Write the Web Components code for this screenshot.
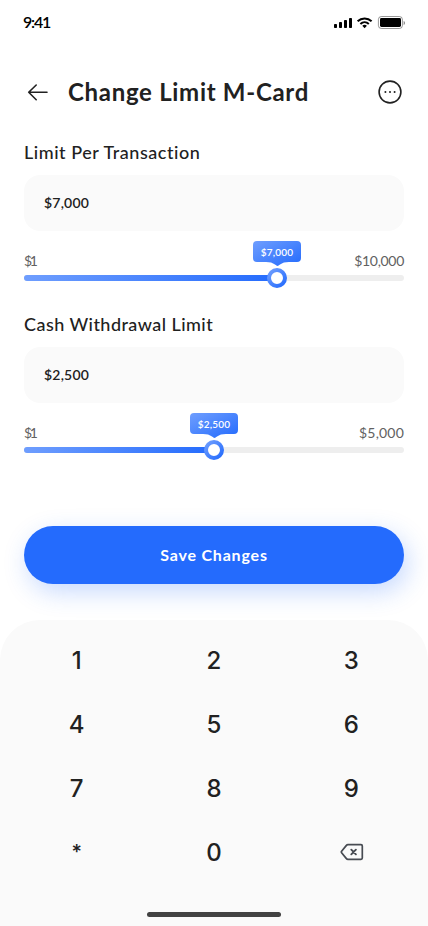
<!DOCTYPE html>
<html lang="en">
<head>
<meta charset="utf-8">
<meta name="viewport" content="width=device-width, initial-scale=1">
<title>Change Limit M-Card</title>
<style>
  body {
    margin: 0;
    background: #fff;
    color: #212121;
    font-family: Lato, "Liberation Sans", sans-serif;
  }

  .cash {
    --label-spacing: 0.45px;
    --max-spacing: 0.2px;
  }
</style>
</head>
<body>
<limit-screen>
  <status-bar time="9:41"></status-bar>
  <page-header>Change Limit M-Card</page-header>
  <limit-field label="Limit Per Transaction" value="$7,000" min="$1" max="$10,000" percent="66.6"></limit-field>
  <limit-field class="cash" label="Cash Withdrawal Limit" value="$2,500" min="$1" max="$5,000" percent="50"></limit-field>
  <primary-button>Save Changes</primary-button>
  <number-pad slot="bottom"></number-pad>
</limit-screen>

<script>
class LimitScreen extends HTMLElement {
  constructor() {
    super();
    this.attachShadow({ mode: 'open' });
    this.shadowRoot.innerHTML = `
    <style>
      :host {
        display: flex;
        flex-direction: column;
        width: 428px;
        height: 926px;
        overflow: hidden;
      }

      main {
        flex: 1;
        display: flex;
        flex-direction: column;
        box-sizing: border-box;
        padding: 0 24px;
      }
    </style>
    <main><slot></slot></main>
    <slot name="bottom"></slot>
    `;
  }
}

class StatusBar extends HTMLElement {
  constructor() {
    super();
    this.attachShadow({ mode: 'open' });
    this.shadowRoot.innerHTML = `
    <style>
      :host {
        display: flex;
        justify-content: space-between;
        align-items: center;
        height: 44px;
        margin: 0 -1px;
        color: #000;
      }

      .time {
        font-size: 16px;
        font-weight: 600;
        line-height: 20px;
        letter-spacing: -1.2px;
      }

      svg {
        display: block;
      }
    </style>
    <span class="time">${this.getAttribute('time')}</span>
    <svg width="72" height="14" viewBox="0 0 72 14">
      <rect x="1" y="9" width="3" height="4" rx="0.8"/>
      <rect x="6" y="7" width="3" height="6" rx="0.8"/>
      <rect x="11" y="5" width="3" height="8" rx="0.8"/>
      <rect x="16" y="3" width="3" height="10" rx="0.8"/>
      <g fill="none" stroke="#000" stroke-width="2">
        <path d="M24.6 6.2a10.2 10.2 0 0 1 14 0"/>
        <path d="M27.4 9a6.2 6.2 0 0 1 8.4 0"/>
      </g>
      <path d="M31.6 13.2l-2.3-2.4a3.4 3.4 0 0 1 4.6 0z"/>
      <rect x="45.4" y="1.5" width="24" height="12" rx="3" fill="none" stroke="#000" stroke-opacity=".4"/>
      <rect x="47" y="3" width="21" height="9" rx="1.4"/>
      <path d="M70.6 6v4c.9-.3 1.4-1.1 1.4-2s-.5-1.7-1.4-2z" fill-opacity=".45"/>
    </svg>
    `;
  }
}

class PageHeader extends HTMLElement {
  constructor() {
    super();
    this.attachShadow({ mode: 'open' });
    this.shadowRoot.innerHTML = `
    <style>
      :host {
        display: flex;
        align-items: center;
        gap: 16px;
        height: 48px;
        margin-top: 24px;
      }

      h1 {
        flex: 1;
        margin: 0;
        padding-bottom: 2px;
        font-size: 24px;
        font-weight: 700;
        line-height: 29px;
        letter-spacing: 0.7px;
        white-space: nowrap;
      }

      svg {
        flex: none;
        fill: none;
        stroke: #212121;
        stroke-linecap: round;
        stroke-linejoin: round;
      }
    </style>
    <svg width="28" height="28" viewBox="0 0 28 28" stroke-width="1.6">
      <path d="M4.7 14.3h18.3M12.2 7l-7.5 7.3 7.5 7.4"/>
    </svg>
    <h1><slot></slot></h1>
    <svg width="28" height="28" viewBox="0 0 28 28" stroke-width="1.6">
      <circle cx="14" cy="14" r="10.9"/>
      <path d="M9.4 14h.01M14 14h.01M18.6 14h.01" stroke-width="2"/>
    </svg>
    `;
  }
}

class LimitField extends HTMLElement {
  constructor() {
    super();
    this.attachShadow({ mode: 'open' });
    const value = this.getAttribute('value');
    this.shadowRoot.innerHTML = `
    <style>
      :host {
        display: block;
        height: 147px;
        margin-top: 25px;
      }

      .label {
        font-size: 18px;
        font-weight: 500;
        line-height: 22px;
        letter-spacing: var(--label-spacing, 0.54px);
        white-space: nowrap;
      }

      .value {
        display: flex;
        align-items: center;
        box-sizing: border-box;
        height: 56px;
        margin-top: 12px;
        padding: 0 20px 1px;
        border-radius: 16px;
        background: #fafafa;
        font-size: 14px;
        font-weight: 600;
        letter-spacing: 0.2px;
      }

      .range {
        display: flex;
        justify-content: space-between;
        margin-top: 20px;
        font-size: 14px;
        line-height: 20px;
        color: #616161;
      }

      .min {
        letter-spacing: -2.4px;
      }

      .max {
        letter-spacing: var(--max-spacing, -0.3px);
      }

      .track {
        position: relative;
        height: 6px;
        margin-top: 4px;
        border-radius: 3px;
        background: #eee;
      }

      .fill {
        width: ${this.getAttribute('percent')}%;
        height: 100%;
        border-radius: 3px;
        background: linear-gradient(286deg, #246bfd 0%, #6f9efe 100%);
      }

      /* knob and tooltip sit over the track */
      .knob, .tip {
        position: absolute;
        left: ${this.getAttribute('percent')}%;
        transform: translateX(-50%);
      }

      .knob {
        top: -7px;
      }

      .tip {
        top: -34px;
        width: 48px;
        height: 26px;
      }

      .tip svg {
        position: absolute;
        inset: 0;
      }

      .tip span {
        position: relative;
        display: block;
        color: #fff;
        font-size: 10px;
        font-weight: 600;
        line-height: 22px;
        letter-spacing: 0.2px;
        text-align: center;
      }

      svg {
        display: block;
      }
    </style>
    <div class="label">${this.getAttribute('label')}</div>
    <div class="value"><span>${value}</span></div>
    <div class="range">
      <span class="min">${this.getAttribute('min')}</span>
      <span class="max">${this.getAttribute('max')}</span>
    </div>
    <div class="track">
      <div class="fill"></div>
      <svg class="knob" width="20" height="20" viewBox="0 0 20 20">
        <defs>
          <linearGradient id="ring" x1="0" y1="0" x2="1" y2="1">
            <stop offset="0" stop-color="#6f9efe"/>
            <stop offset="1" stop-color="#246bfd"/>
          </linearGradient>
        </defs>
        <circle cx="10" cy="10" r="8" fill="#fff" stroke="url(#ring)" stroke-width="4"/>
      </svg>
      <div class="tip">
        <svg width="48" height="26" viewBox="0 0 48 26">
          <defs>
            <linearGradient id="bubble" x1="0" y1="0" x2="1" y2="1">
              <stop offset="0" stop-color="#6f9efe"/>
              <stop offset="1" stop-color="#246bfd"/>
            </linearGradient>
          </defs>
          <path fill="url(#bubble)" d="M4 0h40a4 4 0 0 1 4 4v13a4 4 0 0 1-4 4H36c-4 0-6.500.8-9 2.600l-1.400 1a2 2 0 0 1-2.200 0l-1.400-1C19.500 21.800 17 21 13 21H4a4 4 0 0 1-4-4V4a4 4 0 0 1 4-4z"/>
        </svg>
        <span>${value}</span>
      </div>
    </div>
    `;
  }
}

class PrimaryButton extends HTMLElement {
  constructor() {
    super();
    this.attachShadow({ mode: 'open' });
    this.shadowRoot.innerHTML = `
    <style>
      :host {
        display: block;
        margin-top: 66px;
      }

      button {
        display: block;
        width: 100%;
        height: 58px;
        padding: 0;
        border: 0;
        border-radius: 29px;
        background: #246bfd;
        box-shadow: 4px 8px 24px rgba(36, 107, 253, 0.25);
        color: #fff;
        font: 700 16px/22px Lato, "Liberation Sans", sans-serif;
        letter-spacing: 0.8px;
      }
    </style>
    <button type="button"><slot></slot></button>
    `;
  }
}

class NumberPad extends HTMLElement {
  constructor() {
    super();
    this.attachShadow({ mode: 'open' });
    const keys = ['1', '2', '3', '4', '5', '6', '7', '8', '9', '*', '0'];
    this.shadowRoot.innerHTML = `
    <style>
      :host {
        display: flex;
        flex-direction: column;
        justify-content: space-between;
        align-items: center;
        box-sizing: border-box;
        height: 306px;
        padding: 8px 8px 9px;
        border-radius: 40px 40px 0 0;
        background: #fafafa;
      }

      .keys {
        display: grid;
        grid-template-columns: repeat(3, 1fr);
        grid-auto-rows: 64px;
        width: 100%;
      }

      .key {
        display: flex;
        justify-content: center;
        align-items: center;
        font: 500 24px/29px Inter, "Liberation Sans", sans-serif;
      }

      .star {
        font-size: 20px;
      }

      .home {
        width: 134px;
        height: 5px;
        border-radius: 3px;
        background: #424242;
      }

      svg {
        margin-left: 1px;
      }
    </style>
    <div class="keys">
      ${keys.map(key => `<div class="key${key === '*' ? ' star' : ''}">${key}</div>`).join('')}
      <div class="key">
        <svg width="24" height="24" viewBox="0 0 24 24" fill="none" stroke="#474b52" stroke-width="1.7" stroke-linecap="round" stroke-linejoin="round">
          <path d="M8 4.7h13a1.3 1.3 0 0 1 1.3 1.3v12a1.3 1.3 0 0 1-1.3 1.3H8c-.8 0-1.3-.3-1.8-.9L1.6 12.7a1.1 1.1 0 0 1 0-1.4L6.2 5.600c.5-.6 1-.9 1.8-.9z"/>
          <path d="M11.3 9.7l4.6 4.6M15.9 9.700l-4.6 4.6" stroke-width="1.9"/>
        </svg>
      </div>
    </div>
    <div class="home"></div>
    `;
  }
}

customElements.define('limit-screen', LimitScreen);
customElements.define('status-bar', StatusBar);
customElements.define('page-header', PageHeader);
customElements.define('limit-field', LimitField);
customElements.define('primary-button', PrimaryButton);
customElements.define('number-pad', NumberPad);
</script>
</body>
</html>
